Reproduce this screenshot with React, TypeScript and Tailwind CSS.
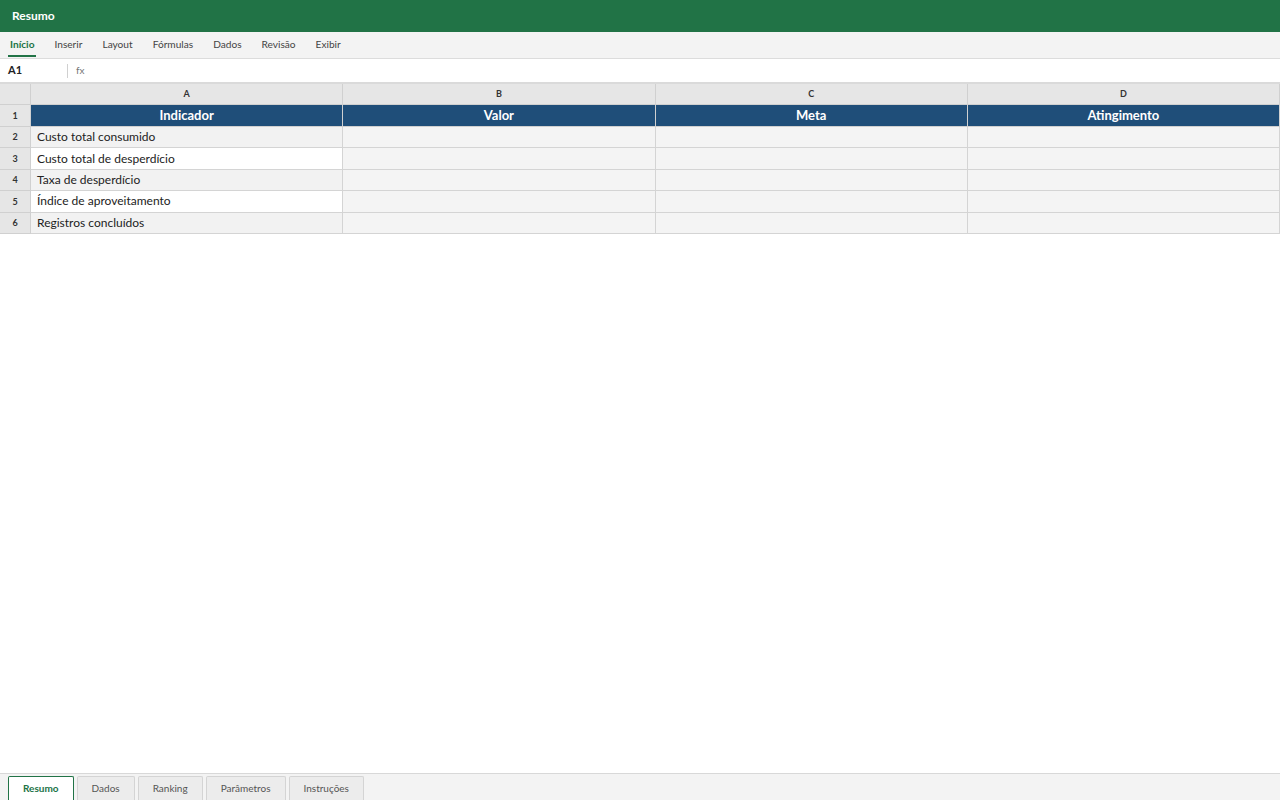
import React from 'react';

const tabs = ['Início', 'Inserir', 'Layout', 'Fórmulas', 'Dados', 'Revisão', 'Exibir'];
const sheets = ['Resumo', 'Dados', 'Ranking', 'Parâmetros', 'Instruções'];
const columns = ['A', 'B', 'C', 'D'];
const headers = ['Indicador', 'Valor', 'Meta', 'Atingimento'];
const rows = [
  'Custo total consumido',
  'Custo total de desperdício',
  'Taxa de desperdício',
  'Índice de aproveitamento',
  'Registros concluídos',
];

function App() {
  return (
    <div className="h-screen flex flex-col bg-white font-['Lato','Noto_Sans',sans-serif] text-[#222] overflow-hidden">
      {/* Title bar */}
      <header className="h-8 shrink-0 bg-[#217346] flex items-center px-3">
        <h1 className="text-[12px] font-bold text-white">Resumo</h1>
      </header>

      {/* Ribbon tabs */}
      <nav className="h-[27px] shrink-0 bg-[#f3f3f3] border-b border-[#dcdcdc] flex items-end gap-4 pl-2">
        {tabs.map((tab, i) => (
          <div
            key={tab}
            className={`px-[2px] h-[25px] pt-[2px] flex items-center text-[10.15px] border-b-2 mb-[1px] ${
              i === 0 ? 'border-[#217346] text-[#217346] font-bold' : 'border-transparent text-[#444]'
            }`}
          >
            {tab}
          </div>
        ))}
      </nav>

      {/* Formula bar */}
      <div className="h-[25px] shrink-0 flex items-center border-b-2 border-[#dadada] bg-white">
        <div className="w-[67px] pl-2 text-[11px] font-bold text-[#222]">A1</div>
        <div className="w-px h-[14px] bg-[#d0d0d0]" />
        <div className="pl-2 text-[10px] text-[#777]">fx</div>
      </div>

      {/* Grid */}
      <div className="shrink-0 grid grid-cols-[31px_1fr_1fr_1fr_1fr] text-[12px]">
        <div className="h-[21px] bg-[#e6e6e6] border-r border-b border-[#d0d0d0]" />
        {columns.map((c) => (
          <div
            key={c}
            className="h-[21px] bg-[#e6e6e6] border-r border-b border-[#d0d0d0] flex items-center justify-center text-[9px] font-bold text-[#333]"
          >
            {c}
          </div>
        ))}

        <div className="h-[22px] bg-[#e6e6e6] border-r border-b border-[#d0d0d0] flex items-center justify-center text-[9px] font-bold text-[#333]">
          1
        </div>
        {headers.map((h) => (
          <div
            key={h}
            className="h-[22px] bg-[#1f4e79] border-r border-b border-[#d0d0d0] flex items-center justify-center text-[13px] font-bold text-white"
          >
            {h}
          </div>
        ))}

        {rows.map((label, i) => (
          <React.Fragment key={label}>
            <div className="h-[21.4px] bg-[#e6e6e6] border-r border-b border-[#d0d0d0] flex items-center justify-center text-[9px] font-bold text-[#333]">
              {i + 2}
            </div>
            <div
              className={`h-[21.4px] border-r border-b border-[#d4d4d4] flex items-center pl-[6px] ${
                i % 2 === 0 ? 'bg-[#f2f2f2]' : 'bg-white'
              }`}
            >
              {label}
            </div>
            <div className="h-[21.4px] bg-[#f4f4f4] border-r border-b border-[#d4d4d4]" />
            <div className="h-[21.4px] bg-[#f4f4f4] border-r border-b border-[#d4d4d4]" />
            <div className="h-[21.4px] bg-[#f4f4f4] border-r border-b border-[#d4d4d4]" />
          </React.Fragment>
        ))}
      </div>

      <div className="flex-1 bg-white" />

      {/* Sheet tabs */}
      <footer className="h-[27px] shrink-0 bg-[#f3f3f3] border-t border-[#d8d8d8] flex items-end gap-[3px] pl-2">
        {sheets.map((s, i) => (
          <div
            key={s}
            className={`h-[24px] min-w-[57px] px-[14px] flex items-center justify-center text-[10px] rounded-t-[2px] border border-b-0 ${
              i === 0
                ? 'bg-white border-[#217346] text-[#217346] font-bold'
                : 'bg-[#ececec] border-[#d4d4d4] text-[#555]'
            }`}
          >
            {s}
          </div>
        ))}
      </footer>
    </div>
  );
}

export default App;
